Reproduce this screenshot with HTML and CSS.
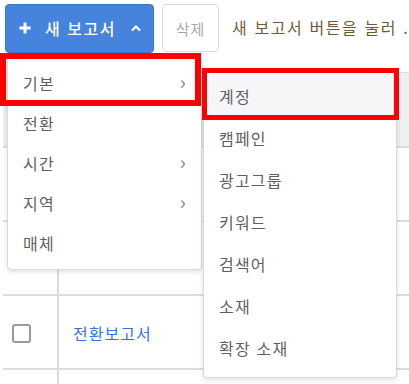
FILE: index.html
```html
<!DOCTYPE html>
<html lang="ko">
<head>
    <meta charset="UTF-8">
    <title>보고서</title>
    <link rel="stylesheet" href="styles.css">
</head>
<body>
    <div class="page">
        <div class="toolbar">
            <button class="btn-new">
                <svg class="plus" width="12" height="12" viewBox="0 0 12 12"><path d="M6 0.5v11M0.5 6h11" stroke="#fff" stroke-width="3"/></svg>
                <span>새 보고서</span>
                <svg class="caret" width="12" height="8" viewBox="0 0 12 8"><path d="M2 6.5L6 2.5l4 4" fill="none" stroke="#fff" stroke-width="2.2"/></svg>
            </button>
            <button class="btn-delete">삭제</button>
            <span class="hint">새 보고서 버튼을 눌러 .</span>
        </div>

        <div class="table">
            <div class="row head"><div class="cell check"></div><div class="cell"></div></div>
            <div class="row"><div class="cell check"></div><div class="cell"></div></div>
            <div class="row"><div class="cell check"></div><div class="cell"></div></div>
            <div class="row"><div class="cell check"><span class="checkbox"></span></div><div class="cell"><a href="#" class="report-link">전환보고서</a></div></div>
            <div class="row last"><div class="cell check"></div><div class="cell"></div></div>
        </div>

        <ul class="menu">
            <li class="item active">기본 <span class="chev">›</span></li>
            <li class="item">전환</li>
            <li class="item">시간 <span class="chev">›</span></li>
            <li class="item">지역 <span class="chev">›</span></li>
            <li class="item">매체</li>
        </ul>

        <ul class="menu sub">
            <li class="item selected">계정</li>
            <li class="item">캠페인</li>
            <li class="item">광고그룹</li>
            <li class="item">키워드</li>
            <li class="item">검색어</li>
            <li class="item">소재</li>
            <li class="item">확장 소재</li>
        </ul>

        <div class="mark mark-main"></div>
        <div class="mark mark-sub"></div>
    </div>
</body>
</html>
```

FILE: styles.css
```css
* {
    margin: 0;
    padding: 0;
    box-sizing: border-box;
}

body {
    font-family: "Noto Sans CJK KR", "Noto Sans", sans-serif;
    background: #ffffff;
    color: #5f5f5f;
    width: 409px;
    height: 384px;
    overflow: hidden;
}

.page {
    position: relative;
    height: 384px;
    overflow: hidden;
}

.toolbar {
    display: flex;
    align-items: center;
    height: 55px;
    padding: 3px 0 0 5px;
}

.btn-new {
    display: flex;
    align-items: center;
    flex-shrink: 0;
    width: 149px;
    height: 49px;
    margin-top: -2px;
    padding-left: 13px;
    background: #4583dc;
    border: 1px solid #3b74c8;
    border-radius: 4px;
    color: #ffffff;
    font-family: inherit;
    font-size: 16px;
    font-weight: 500;
    letter-spacing: 1.5px;
}

.btn-new .plus {
    margin-right: 14px;
}

.btn-new .caret {
    margin-left: 14px;
}

.btn-delete {
    flex-shrink: 0;
    width: 57px;
    height: 48px;
    margin-left: 8px;
    margin-top: -2px;
    background: #ffffff;
    border: 1px solid #dcdcdc;
    border-radius: 4px;
    color: #a8a8a8;
    font-family: inherit;
    font-size: 15px;
    letter-spacing: 1px;
}

.hint {
    margin-left: 13px;
    margin-top: -4px;
    font-size: 16px;
    letter-spacing: 1.6px;
    color: #6f5a36;
    white-space: nowrap;
}

.table {
    margin: 17px 0 0 3px;
    border-top: 1px solid #dddddd;
}

.row {
    display: grid;
    grid-template-columns: 56px 1fr;
    height: 74px;
    border-bottom: 2px solid #dcdcdc;
}

.row.head {
    height: 75px;
    background: #efefef;
}

.row.last {
    height: 14px;
    border-bottom: none;
}

.cell {
    display: flex;
    align-items: center;
}

.cell.check {
    justify-content: center;
    border-right: 2px solid #dcdcdc;
    padding-right: 17px;
}

.head .cell.check {
    border-right-color: #e2e2e2;
}

.checkbox {
    width: 19px;
    height: 19px;
    border: 2px solid #9a9a9a;
    border-radius: 3px;
    margin-top: 2px;
}

.report-link {
    margin-left: 14px;
    margin-top: 2px;
    color: #3b6fe0;
    text-decoration: none;
    font-size: 16px;
    letter-spacing: 1px;
}

.menu {
    position: absolute;
    left: 7px;
    top: 56px;
    width: 195px;
    height: 214px;
    padding-top: 6px;
    list-style: none;
    background: #ffffff;
    border: 1px solid #dadada;
    border-radius: 4px;
    box-shadow: 0 2px 5px rgba(0, 0, 0, 0.12);
}

.menu .item {
    display: flex;
    align-items: center;
    justify-content: space-between;
    height: 40px;
    padding: 0 14px 0 15px;
    font-size: 16px;
    letter-spacing: 1.2px;
    color: #5f5f5f;
}

.menu .chev {
    font-size: 20px;
    color: #888888;
    margin-top: -3px;
}

.menu.sub {
    left: 203px;
    top: 70px;
    width: 194px;
    height: 308px;
    padding-top: 4px;
}

.menu.sub .item {
    height: 42px;
}

.menu.sub .item.selected {
    background: #f5f6f8;
}

.mark {
    position: absolute;
    border: 6px solid #ff0000;
}

.mark-main {
    left: 0;
    top: 53px;
    width: 201px;
    height: 53px;
}

.mark-sub {
    left: 202px;
    top: 68px;
    width: 197px;
    height: 52px;
    border-width: 5px;
}
```
